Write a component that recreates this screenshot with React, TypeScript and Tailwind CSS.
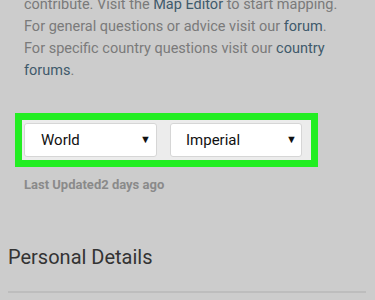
import React from "react";

export default function App() {
  return (
    <div
      className="w-[375px] h-[300px] overflow-hidden bg-[#cccccc]"
      style={{ fontFamily: "Roboto, 'Liberation Sans', sans-serif" }}
    >
      <div className="px-[24px] -mt-[6px] text-[14.5px] leading-[22px] text-[#7a7a7a]">
        <p>
          contribute. Visit the <span className="text-[#3f5a6b]">Map Editor</span> to start mapping.
        </p>
        <p>
          For general questions or advice visit our <span className="text-[#3f5a6b]">forum</span>.
        </p>
        <p>
          For specific country questions visit our <span className="text-[#3f5a6b]">country</span>
          <br />
          <span className="text-[#3f5a6b]">forums</span>.
        </p>
      </div>
      <div className="ml-[15px] mt-[31px] w-[303px] h-[54px] border-[7px] border-[#22ee22] bg-[#ececec] flex items-center gap-[13px] pl-[2px]">
        <div className="w-[133px] h-[34px] bg-white border border-[#d6d6d6] rounded-[3px] flex items-center justify-between pl-[16px] pr-[5px] text-[15px] text-[#111]">
          <span>World</span>
          <span className="text-[11px]">▼</span>
        </div>
        <div className="w-[132px] h-[34px] bg-white border border-[#d6d6d6] rounded-[3px] flex items-center justify-between pl-[15px] pr-[4px] text-[15px] text-[#111]">
          <span>Imperial</span>
          <span className="text-[11px]">▼</span>
        </div>
      </div>
      <div className="ml-[24px] mt-[10px] text-[13px] font-bold text-[#8a8a8a] leading-[16px]">
        Last Updated2 days ago
      </div>
      <div className="ml-[8px] mt-[52px] text-[20px] leading-[24px] text-[#333333]">Personal Details</div>
      <div className="ml-[8px] mt-[22px] w-[358px] h-[2px] bg-[#bdbdbd]" />
    </div>
  );
}
